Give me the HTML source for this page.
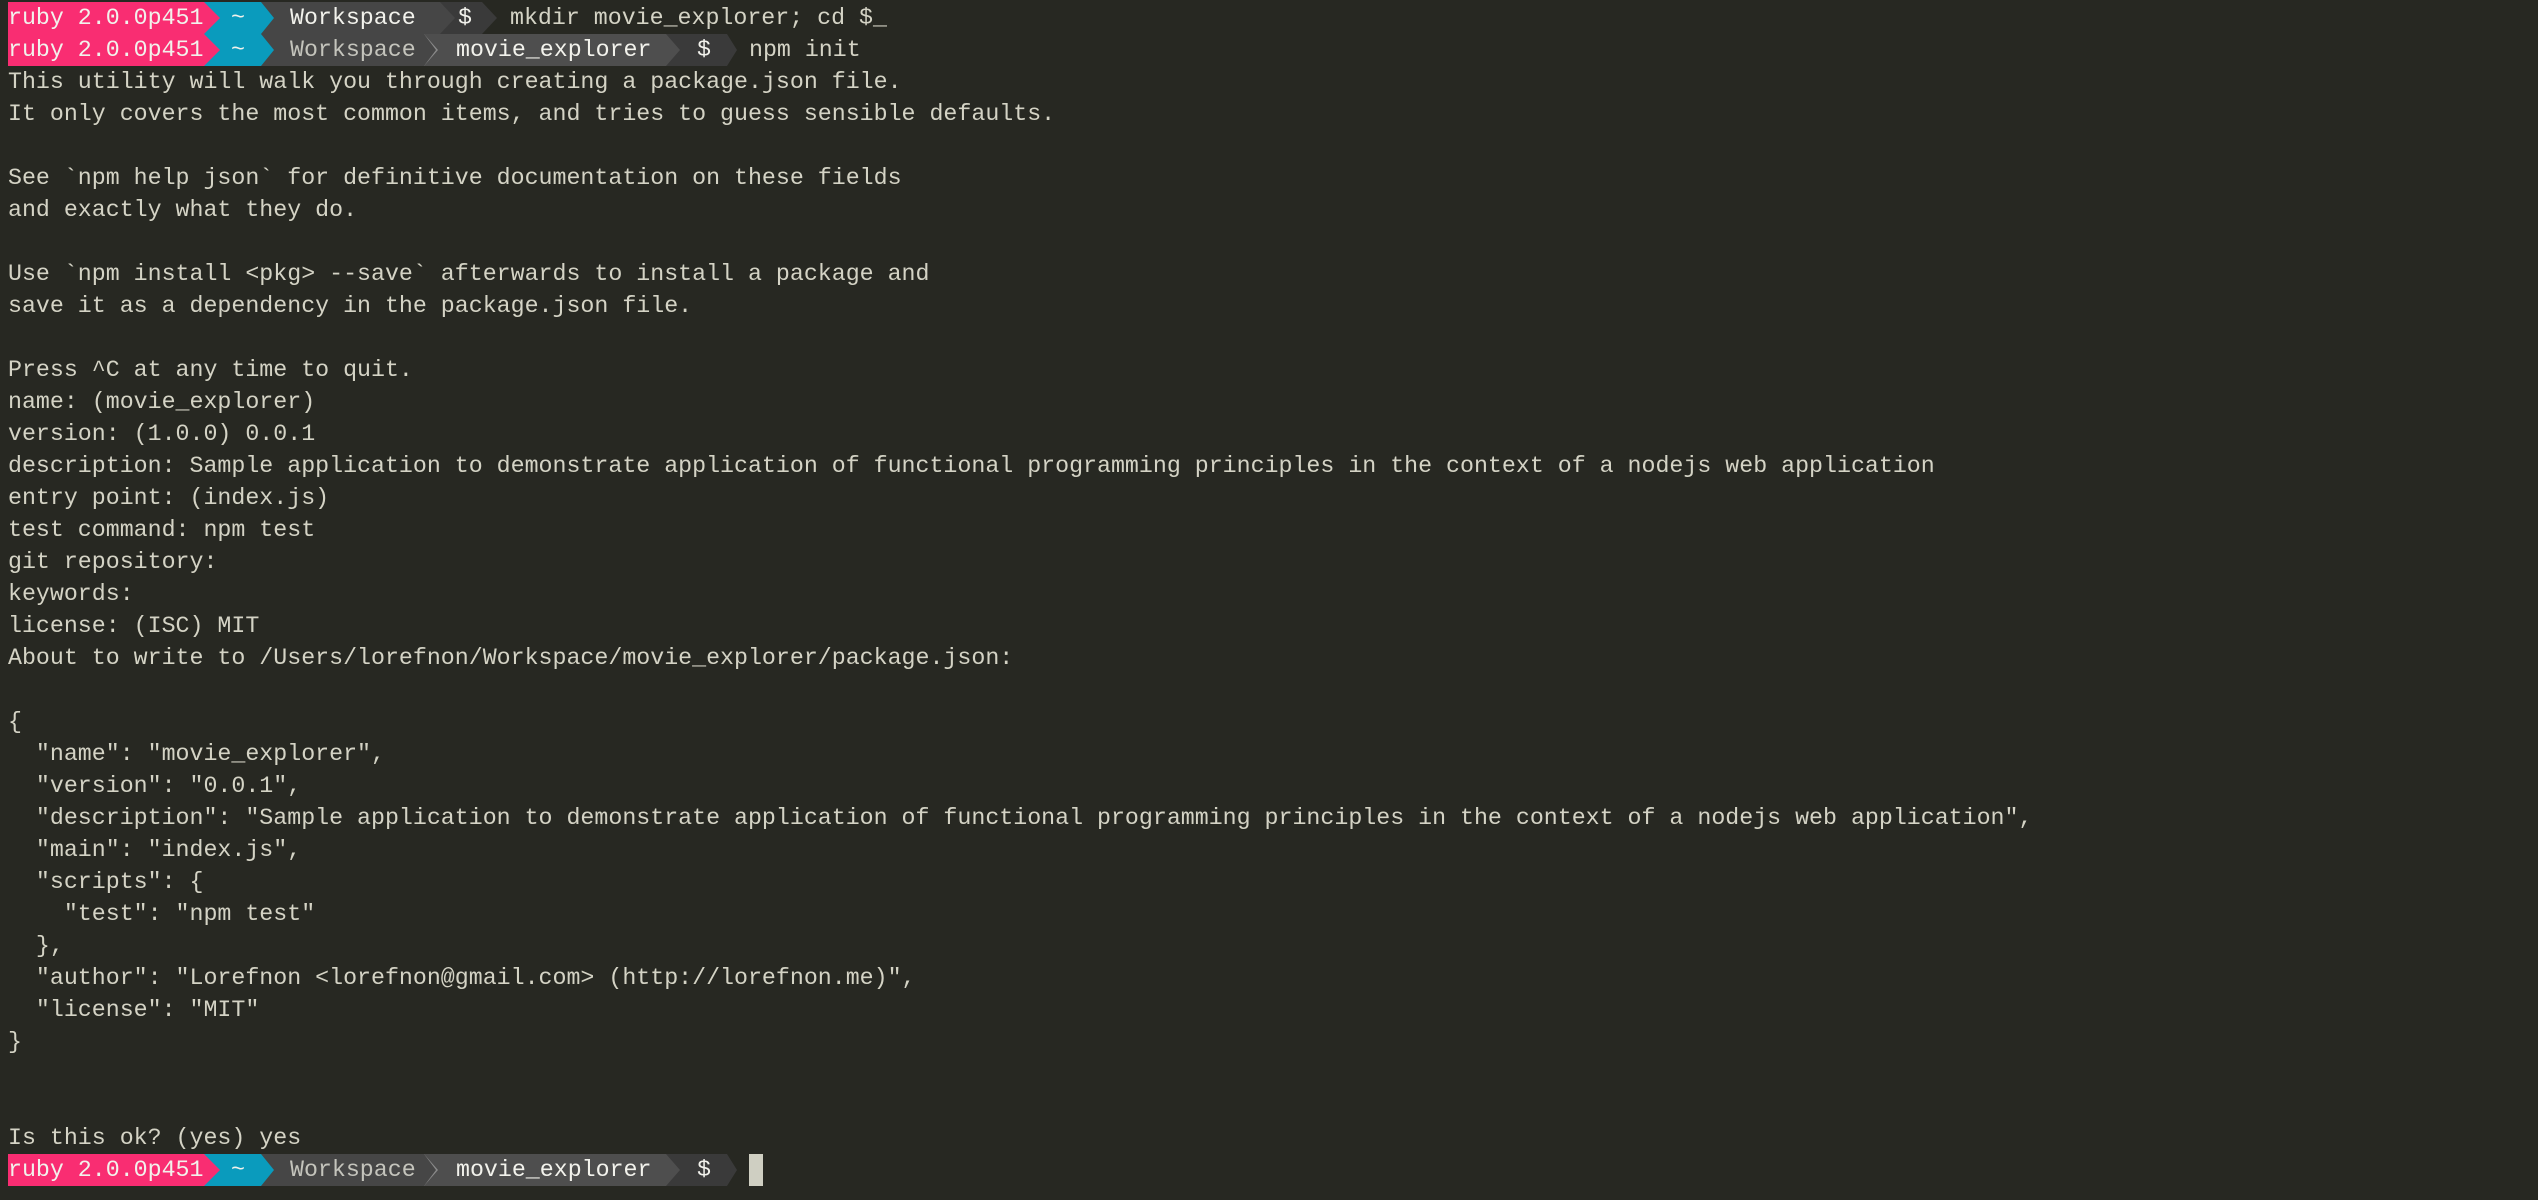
<!DOCTYPE html>
<html><head><meta charset="utf-8"><style>
html,body{margin:0;padding:0;background:#272822;width:2538px;height:1200px;overflow:hidden}
body{font-family:"Liberation Mono",monospace;font-size:23.28px;color:#d4d3c5;position:relative}
.l{position:absolute;left:8px;height:32px;line-height:32px;white-space:pre}
.s{position:absolute;height:32px;}
.t{position:absolute;height:32px;line-height:32px;white-space:pre;color:#f2f2ec}
</style></head><body>
<!-- prompt 1 -->
<div class="s" style="top:2px;left:440px;width:57px;background:#3a3a3a;clip-path:polygon(0 0,42px 0,57px 50%,42px 100%,0 100%)"></div>
<div class="s" style="top:2px;left:261px;width:194px;background:#464646;clip-path:polygon(0 0,179px 0,194px 50%,179px 100%,0 100%)"></div>
<div class="s" style="top:2px;left:204px;width:70px;background:#0a9bbd;clip-path:polygon(0 0,57px 0,70px 50%,57px 100%,0 100%)"></div>
<div class="s" style="top:2px;left:8px;width:212px;background:#f92d72;clip-path:polygon(0 0,196px 0,212px 50%,196px 100%,0 100%)"></div>
<div class="t" style="top:2px;left:8px">ruby 2.0.0p451</div>
<div class="t" style="top:2px;left:231px">~</div>
<div class="t" style="top:2px;left:290px">Workspace</div>
<div class="t" style="top:2px;left:458px">$</div>
<div class="l" style="top:2px;left:510px">mkdir movie_explorer; cd $_</div>
<!-- prompt 2 -->
<div class="s" style="top:34px;left:666px;width:71px;background:#3a3a3a;clip-path:polygon(0 0,61px 0,71px 50%,61px 100%,0 100%)"></div>
<div class="s" style="top:34px;left:424px;width:256px;background:#4e4e4e;clip-path:polygon(0 0,242px 0,256px 50%,242px 100%,0 100%)"></div>
<div class="s" style="top:34px;left:420px;width:22px;background:#8a8a8a;clip-path:polygon(0 0,4px 0,18px 50%,4px 100%,0 100%,0 96%,12px 50%,0 4%)"></div>
<div class="s" style="top:34px;left:261px;width:175px;background:#464646;clip-path:polygon(0 0,163px 0,175px 50%,163px 100%,0 100%)"></div>
<div class="s" style="top:34px;left:204px;width:70px;background:#0a9bbd;clip-path:polygon(0 0,57px 0,70px 50%,57px 100%,0 100%)"></div>
<div class="s" style="top:34px;left:8px;width:212px;background:#f92d72;clip-path:polygon(0 0,196px 0,212px 50%,196px 100%,0 100%)"></div>
<div class="t" style="top:34px;left:8px">ruby 2.0.0p451</div>
<div class="t" style="top:34px;left:231px">~</div>
<div class="t" style="top:34px;left:290px;color:#c4c4bc">Workspace</div>
<div class="t" style="top:34px;left:456px">movie_explorer</div>
<div class="t" style="top:34px;left:697px">$</div>
<div class="l" style="top:34px;left:749px">npm init</div>

<div class="l" style="top:66px">This utility will walk you through creating a package.json file.</div>
<div class="l" style="top:98px">It only covers the most common items, and tries to guess sensible defaults.</div>
<div class="l" style="top:162px">See `npm help json` for definitive documentation on these fields</div>
<div class="l" style="top:194px">and exactly what they do.</div>
<div class="l" style="top:258px">Use `npm install &lt;pkg&gt; --save` afterwards to install a package and</div>
<div class="l" style="top:290px">save it as a dependency in the package.json file.</div>
<div class="l" style="top:354px">Press ^C at any time to quit.</div>
<div class="l" style="top:386px">name: (movie_explorer)</div>
<div class="l" style="top:418px">version: (1.0.0) 0.0.1</div>
<div class="l" style="top:450px">description: Sample application to demonstrate application of functional programming principles in the context of a nodejs web application</div>
<div class="l" style="top:482px">entry point: (index.js)</div>
<div class="l" style="top:514px">test command: npm test</div>
<div class="l" style="top:546px">git repository:</div>
<div class="l" style="top:578px">keywords:</div>
<div class="l" style="top:610px">license: (ISC) MIT</div>
<div class="l" style="top:642px">About to write to /Users/lorefnon/Workspace/movie_explorer/package.json:</div>
<div class="l" style="top:706px">{</div>
<div class="l" style="top:738px">  "name": "movie_explorer",</div>
<div class="l" style="top:770px">  "version": "0.0.1",</div>
<div class="l" style="top:802px">  "description": "Sample application to demonstrate application of functional programming principles in the context of a nodejs web application",</div>
<div class="l" style="top:834px">  "main": "index.js",</div>
<div class="l" style="top:866px">  "scripts": {</div>
<div class="l" style="top:898px">    "test": "npm test"</div>
<div class="l" style="top:930px">  },</div>
<div class="l" style="top:962px">  "author": "Lorefnon &lt;lorefnon@gmail.com&gt; (http://lorefnon.me)",</div>
<div class="l" style="top:994px">  "license": "MIT"</div>
<div class="l" style="top:1026px">}</div>
<div class="l" style="top:1122px">Is this ok? (yes) yes</div>
<!-- prompt 3 -->
<div class="s" style="top:1154px;left:666px;width:71px;background:#3a3a3a;clip-path:polygon(0 0,61px 0,71px 50%,61px 100%,0 100%)"></div>
<div class="s" style="top:1154px;left:424px;width:256px;background:#4e4e4e;clip-path:polygon(0 0,242px 0,256px 50%,242px 100%,0 100%)"></div>
<div class="s" style="top:1154px;left:420px;width:22px;background:#8a8a8a;clip-path:polygon(0 0,4px 0,18px 50%,4px 100%,0 100%,0 96%,12px 50%,0 4%)"></div>
<div class="s" style="top:1154px;left:261px;width:175px;background:#464646;clip-path:polygon(0 0,163px 0,175px 50%,163px 100%,0 100%)"></div>
<div class="s" style="top:1154px;left:204px;width:70px;background:#0a9bbd;clip-path:polygon(0 0,57px 0,70px 50%,57px 100%,0 100%)"></div>
<div class="s" style="top:1154px;left:8px;width:212px;background:#f92d72;clip-path:polygon(0 0,196px 0,212px 50%,196px 100%,0 100%)"></div>
<div class="t" style="top:1154px;left:8px">ruby 2.0.0p451</div>
<div class="t" style="top:1154px;left:231px">~</div>
<div class="t" style="top:1154px;left:290px;color:#c4c4bc">Workspace</div>
<div class="t" style="top:1154px;left:456px">movie_explorer</div>
<div class="t" style="top:1154px;left:697px">$</div>
<div class="s" style="top:1154px;left:749px;width:14px;background:#cfcfc2"></div>
</body></html>
